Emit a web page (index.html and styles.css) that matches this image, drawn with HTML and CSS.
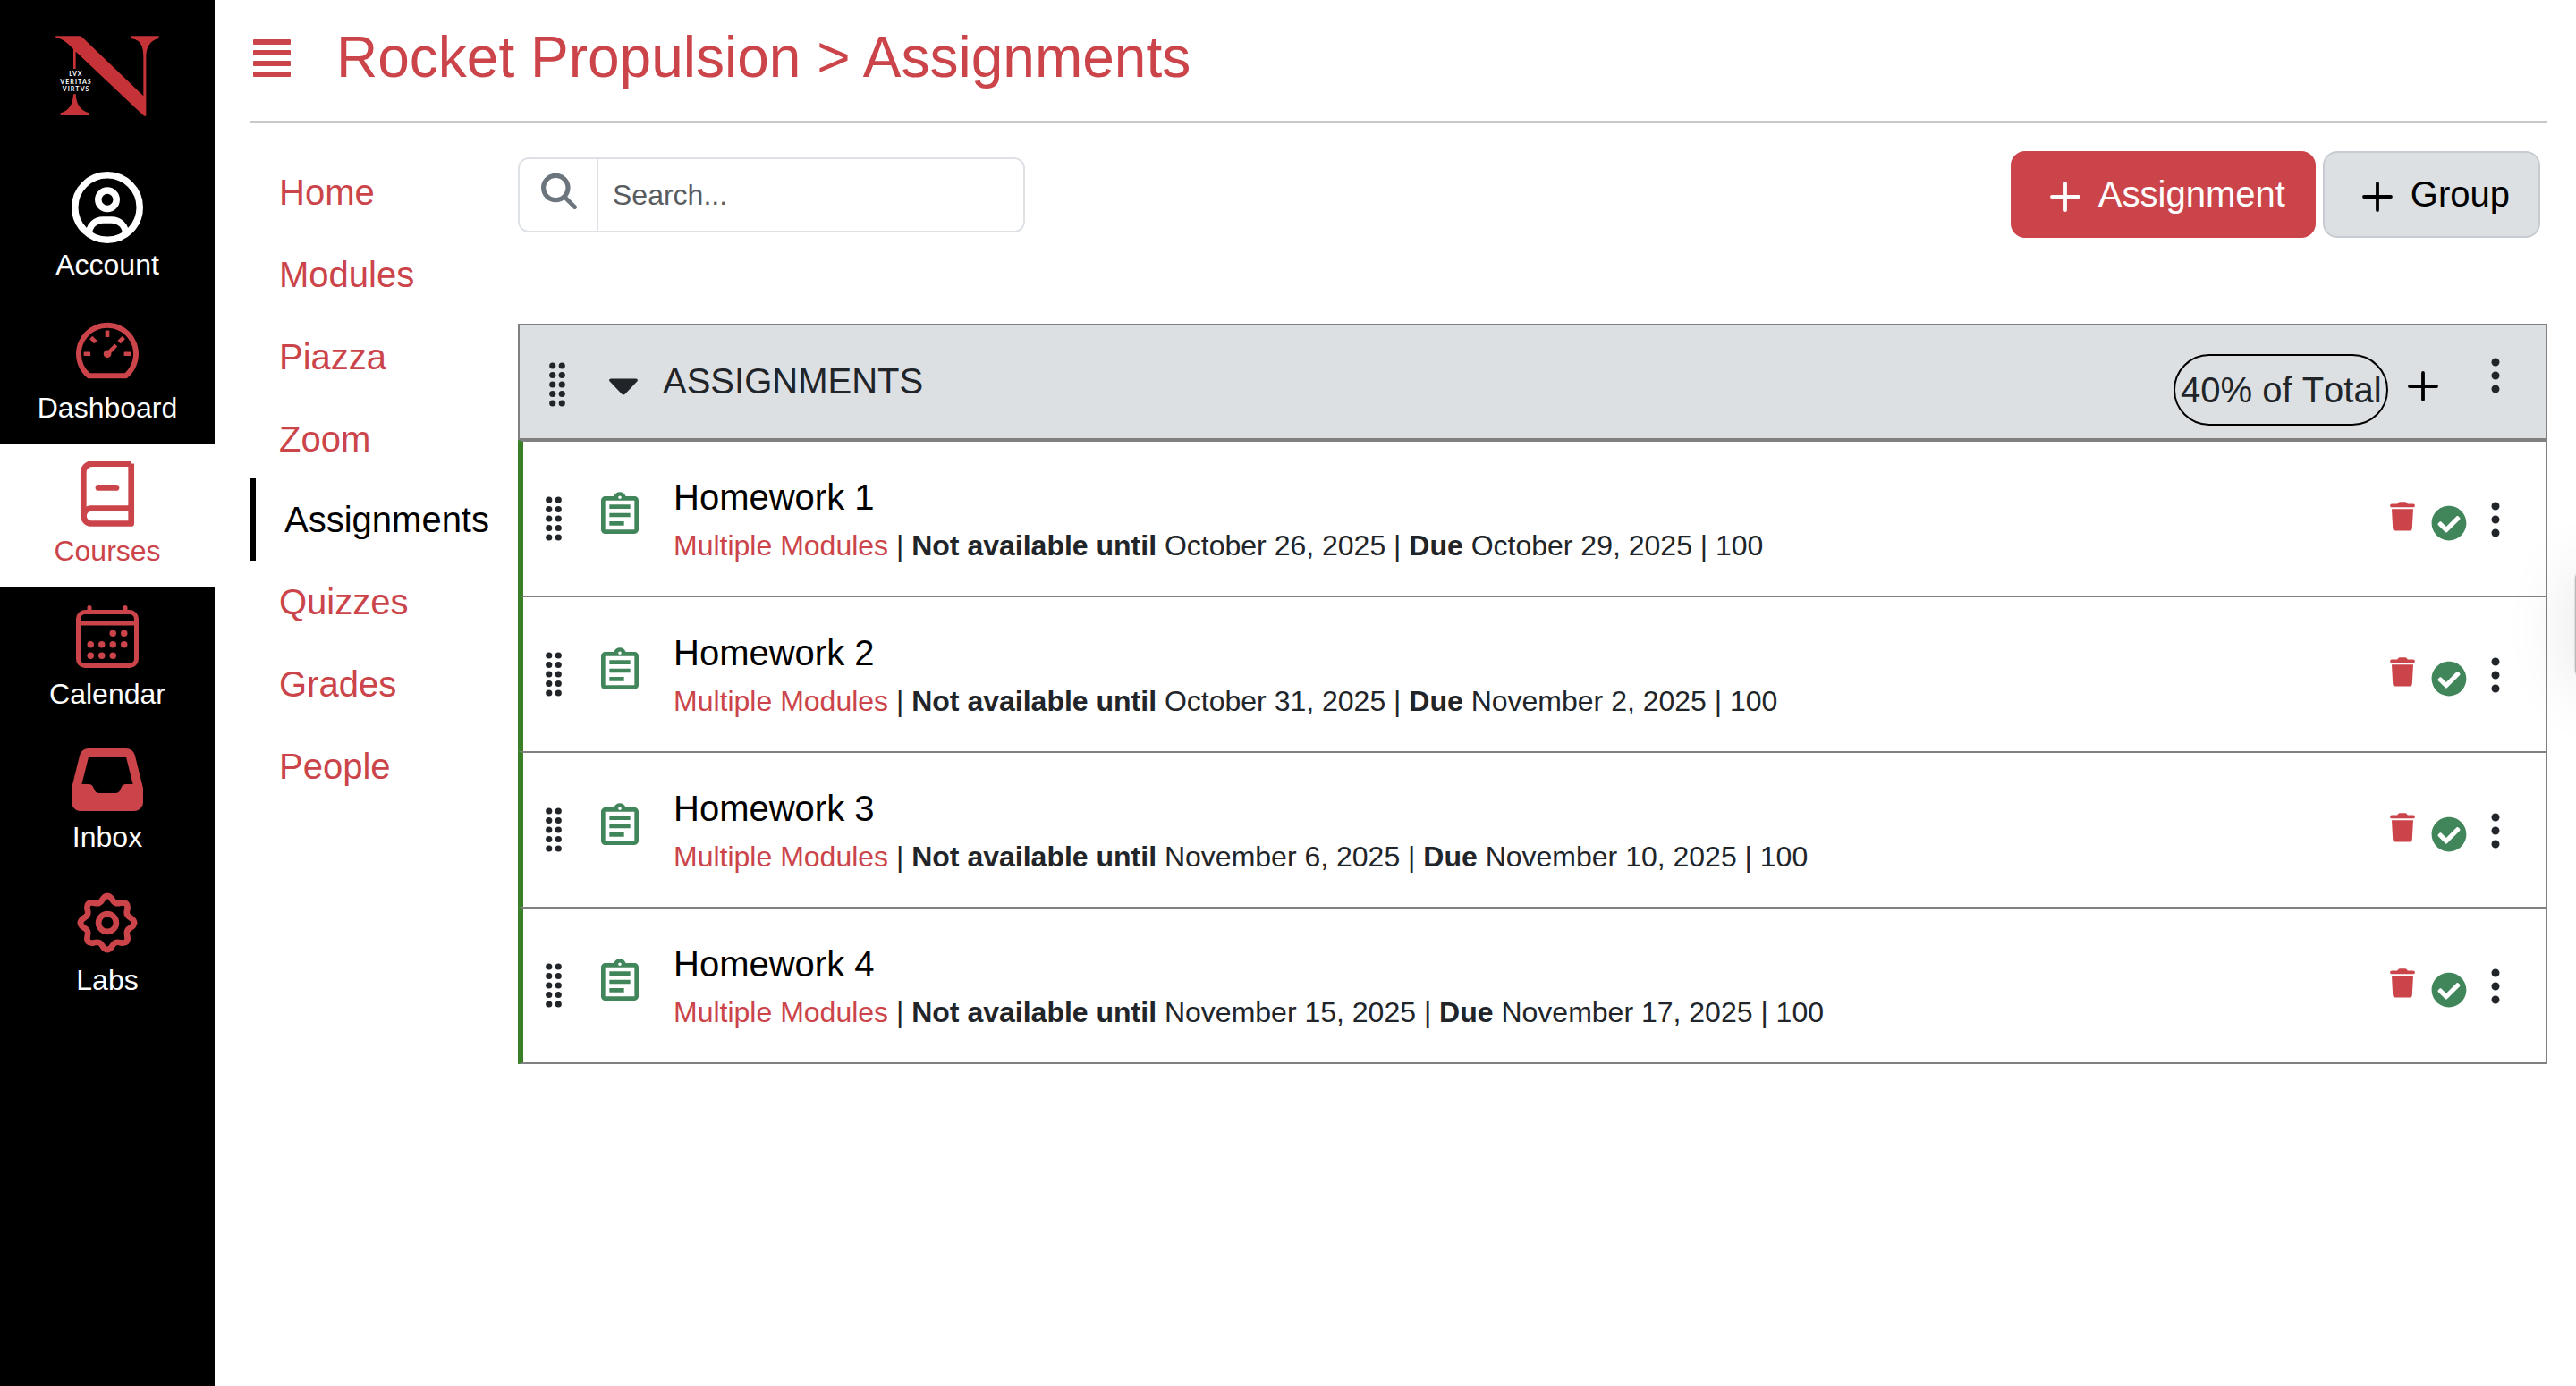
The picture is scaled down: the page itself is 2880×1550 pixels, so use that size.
FILE: index.html
```html
<!DOCTYPE html>
<html lang="en">
<head>
<meta charset="utf-8">
<title>Rocket Propulsion - Assignments</title>
<link rel="stylesheet" href="styles.css">
</head>
<body>
<svg class="defs" width="0" height="0" aria-hidden="true">
  <symbol id="grip" viewBox="0 0 18 50">
    <g fill="currentColor"><circle cx="3.75" cy="4" r="3.6"/><circle cx="14.25" cy="4" r="3.6"/><circle cx="3.75" cy="14.5" r="3.6"/><circle cx="14.25" cy="14.5" r="3.6"/><circle cx="3.75" cy="25" r="3.6"/><circle cx="14.25" cy="25" r="3.6"/><circle cx="3.75" cy="35.5" r="3.6"/><circle cx="14.25" cy="35.5" r="3.6"/><circle cx="3.75" cy="46" r="3.6"/><circle cx="14.25" cy="46" r="3.6"/></g>
  </symbol>
  <symbol id="kebab" viewBox="0 0 16 16">
    <path fill="currentColor" d="M9.5 13a1.5 1.5 0 1 1-3 0 1.5 1.5 0 0 1 3 0m0-5a1.5 1.5 0 1 1-3 0 1.5 1.5 0 0 1 3 0m0-5a1.5 1.5 0 1 1-3 0 1.5 1.5 0 0 1 3 0"/>
  </symbol>
  <symbol id="plus" viewBox="0 0 34 34">
    <path d="M17 2v30M2 17h30" stroke="currentColor" stroke-width="3.8" stroke-linecap="round"/>
  </symbol>
  <symbol id="task" viewBox="0 0 24 24">
    <path fill="currentColor" d="M7 15h7v2H7zm0-4h10v2H7zm0-4h10v2H7zm12-4h-4.180C14.400 1.840 13.300 1 12 1s-2.400.840-2.820 2H5c-.140 0-.270.010-.400.040-.390.080-.740.280-1.010.550-.180.180-.330.400-.430.640-.100.230-.160.490-.160.770v14c0 .270.060.540.160.780s.250.450.430.640c.270.270.620.470 1.010.550.130.020.260.030.400.030h14c1.100 0 2-.900 2-2V5c0-1.100-.900-2-2-2zm-7-.250c.410 0 .750.340.750.750s-.340.750-.750.750-.750-.340-.750-.750.340-.750.750-.750zM19 19H5V5h14v14z"/>
  </symbol>
  <symbol id="trash" viewBox="0 0 28 33">
    <path fill="currentColor" d="M2 2.500H8.200L9.300 1Q9.900.200 11 .200H17Q18.100.200 18.700 1L19.800 2.500H26A1.900 1.900 0 0 1 26 6.300H2A1.900 1.900 0 0 1 2 2.500ZM2 8.300H26L24.800 30Q24.600 32.500 22.200 32.500H5.800Q3.400 32.500 3.200 30Z"/>
  </symbol>
  <symbol id="check" viewBox="0 0 512 512">
    <path fill="currentColor" d="M504 256c0 136.967-111.033 248-248 248S8 392.967 8 256 119.033 8 256 8s248 111.033 248 248zM227.314 387.314l184-184c6.248-6.248 6.248-16.379 0-22.627l-22.627-22.627c-6.248-6.249-16.379-6.249-22.628 0L216 308.118l-70.059-70.059c-6.248-6.248-16.379-6.248-22.628 0l-22.627 22.627c-6.248 6.248-6.248 16.379 0 22.627l104 104c6.249 6.249 16.379 6.249 22.628.001z"/>
  </symbol>
</svg>

<div class="app">
  <aside class="sidebar">
    <svg class="logo" viewBox="0 0 720 528">
      <g fill="#c53338">
        <path d="M187 121H267Q272 121 277 126L481 322V190C481 145 465 133 439 129V121H533V129C507 134 490 155 490 190V389H483L254 173V231H246V165C225 143 210 130 187 127Z"/>
        <path d="M246 316H254C255 350 272 374 299 379V387H203V379C230 374 245 350 246 316Z"/>
      </g>
      <g fill="#fff" class="motto">
        <text x="232" y="254" textLength="42">LVX</text>
        <text x="202" y="281" textLength="103">VERITAS</text>
        <text x="209" y="307" textLength="89">VIRTVS</text>
      </g>
    </svg>
    <a class="side-item account">
      <svg viewBox="0 0 80 80" fill="none" stroke="currentColor" stroke-width="7.500"><circle cx="40" cy="40" r="36.250"/><circle cx="40" cy="31.300" r="10.200"/><path d="M19.500 68C20 60 27 54 35 54H45C53 54 60 60 60.500 68"/></svg>
      <span>Account</span>
    </a>
    <a class="side-item">
      <svg viewBox="0 0 1024 1024" fill="currentColor"><path d="M924.800 385.600a446.700 446.700 0 0 0-96-142.400 446.700 446.700 0 0 0-142.400-96C631.100 123.800 572.500 112 512 112s-119.100 11.800-174.400 35.200a446.700 446.700 0 0 0-142.400 96 446.700 446.700 0 0 0-96 142.400C75.800 440.900 64 499.500 64 560c0 132.700 58.300 257.700 159.900 343.100l1.700 1.400c5.800 4.800 13.100 7.500 20.600 7.500h531.700c7.500 0 14.800-2.700 20.600-7.500l1.700-1.400C901.700 817.700 960 692.700 960 560c0-60.500-11.900-119.100-35.200-174.400zM761.400 836H262.600A371.120 371.120 0 0 1 140 560c0-99.400 38.700-192.800 109-263 70.300-70.300 163.700-109 263-109 99.400 0 192.800 38.700 263 109 70.300 70.300 109 163.700 109 263 0 105.600-44.500 205.500-122.600 276zM623.500 421.500a8.030 8.030 0 0 0-11.300 0L527.700 506c-18.700-5-39.400-.2-54.100 14.500a55.950 55.950 0 0 0 0 79.200 55.950 55.950 0 0 0 79.200 0 55.870 55.870 0 0 0 14.500-54.100l84.500-84.500c3.100-3.100 3.100-8.200 0-11.300l-28.300-28.300zM490 320h44c4.400 0 8-3.600 8-8v-80c0-4.400-3.600-8-8-8h-44c-4.400 0-8 3.600-8 8v80c0 4.400 3.600 8 8 8zm260 218v44c0 4.400 3.600 8 8 8h80c4.400 0 8-3.600 8-8v-44c0-4.400-3.600-8-8-8h-80c-4.400 0-8 3.600-8 8zm12.700-197.200l-31.100-31.100a8.030 8.030 0 0 0-11.300 0l-56.600 56.600a8.030 8.030 0 0 0 0 11.300l31.100 31.100c3.100 3.100 8.200 3.100 11.300 0l56.600-56.600c3.100-3.100 3.100-8.200 0-11.300zm-458.600-31.100a8.030 8.030 0 0 0-11.300 0l-31.100 31.100a8.030 8.030 0 0 0 0 11.300l56.600 56.600c3.100 3.100 8.200 3.100 11.300 0l31.100-31.100c3.100-3.100 3.100-8.200 0-11.300l-56.600-56.600zM262 530h-80c-4.400 0-8 3.600-8 8v44c0 4.400 3.600 8 8 8h80c4.400 0 8-3.600 8-8v-44c0-4.400-3.600-8-8-8z"/></svg>
      <span>Dashboard</span>
    </a>
    <a class="side-item active">
      <svg viewBox="0 0 80 80" fill="none" stroke="currentColor" stroke-width="6.700" stroke-linejoin="round"><path d="M66.700 6.600H23a9.700 9.700 0 0 0-9.700 9.700V65"/><path d="M66.700 56.500H22a8.500 8.500 0 0 0 0 17H66.700V6.600"/><path d="M30 33.400H50" stroke-linecap="round"/></svg>
      <span>Courses</span>
    </a>
    <a class="side-item">
      <svg viewBox="0 0 512 512" fill="none" stroke="currentColor" stroke-width="32" stroke-linejoin="round"><rect x="48" y="80" width="416" height="384" rx="48"/><path d="M128 48v32M384 48v32" stroke-linecap="round"/><path d="M464 160H48"/><g fill="currentColor" stroke="none"><circle cx="296" cy="232" r="24"/><circle cx="376" cy="232" r="24"/><circle cx="296" cy="312" r="24"/><circle cx="376" cy="312" r="24"/><circle cx="136" cy="312" r="24"/><circle cx="216" cy="312" r="24"/><circle cx="136" cy="392" r="24"/><circle cx="216" cy="392" r="24"/><circle cx="296" cy="392" r="24"/></g></svg>
      <span>Calendar</span>
    </a>
    <a class="side-item">
      <svg viewBox="0 0 512 512" fill="currentColor"><path d="M121 32C91.600 32 66 52 58.900 80.500L1.900 308.400C.6 313.500 0 318.700 0 323.900V416c0 35.300 28.700 64 64 64H448c35.300 0 64-28.700 64-64V323.900c0-5.200-.6-10.400-1.900-15.500l-57-227.900C446 52 420.400 32 391 32H121zm0 64H391l48 192H387.800c-12.100 0-23.200 6.800-28.600 17.700l-14.300 28.600c-5.400 10.800-16.500 17.700-28.600 17.700H195.800c-12.100 0-23.200-6.800-28.600-17.700l-14.300-28.600c-5.400-10.800-16.500-17.700-28.600-17.700H73L121 96z"/></svg>
      <span>Inbox</span>
    </a>
    <a class="side-item">
      <svg viewBox="-40 -40 80 80" fill="none" stroke="currentColor" stroke-width="6.700" stroke-linecap="round">
        <circle r="9.900"/>
        <path id="lobe" d="M0-30C5.500-30 4.560-24.080 9.180-22.170 13.800-20.260 17.320-25.100 21.210-21.210"/>
        <use href="#lobe" transform="rotate(45)"/><use href="#lobe" transform="rotate(90)"/><use href="#lobe" transform="rotate(135)"/><use href="#lobe" transform="rotate(180)"/><use href="#lobe" transform="rotate(225)"/><use href="#lobe" transform="rotate(270)"/><use href="#lobe" transform="rotate(315)"/>
      </svg>
      <span>Labs</span>
    </a>
  </aside>

  <main class="main">
    <header class="page-head">
      <svg class="menu" viewBox="0 0 42 42" fill="currentColor"><rect width="42" height="6" rx="1"/><rect y="12" width="42" height="6" rx="1"/><rect y="24" width="42" height="6" rx="1"/><rect y="36" width="42" height="6" rx="1"/></svg>
      <h1>Rocket Propulsion &gt; Assignments</h1>
    </header>

    <div class="columns">
      <nav class="course-nav">
        <a>Home</a>
        <a>Modules</a>
        <a>Piazza</a>
        <a>Zoom</a>
        <a class="current">Assignments</a>
        <a>Quizzes</a>
        <a>Grades</a>
        <a>People</a>
      </nav>

      <section class="content">
        <div class="controls">
          <div class="search">
            <span class="search-icon"><svg viewBox="0 0 40 40" fill="none" stroke="currentColor"><circle cx="16.300" cy="16" r="13.700" stroke-width="5.200"/><path d="M26 26L37.600 37.600" stroke-width="4.800" stroke-linecap="round"/></svg></span>
            <span class="search-input">Search...</span>
          </div>
          <div class="buttons">
            <a class="btn danger"><svg><use href="#plus"/></svg>Assignment</a>
            <a class="btn light"><svg><use href="#plus"/></svg>Group</a>
          </div>
        </div>

        <div class="group">
          <div class="group-head">
            <svg class="grip"><use href="#grip"/></svg>
            <svg class="caret" viewBox="0 0 32 19"><path fill="currentColor" d="M2 .500H30Q33 1 31.300 3.500L18 17.500Q16 19.500 14 17.500L.700 3.500Q-1 1 2 .500Z"/></svg>
            <span class="group-title">ASSIGNMENTS</span>
            <span class="pill">40% of Total</span>
            <svg class="add"><use href="#plus"/></svg>
            <svg class="kebab"><use href="#kebab"/></svg>
          </div>

          <div class="row">
            <svg class="grip"><use href="#grip"/></svg>
            <svg class="task"><use href="#task"/></svg>
            <div class="info"><div class="name">Homework 1</div><div class="meta"><span class="mods">Multiple Modules</span> | <b>Not available until</b> October 26, 2025 | <b>Due</b> October 29, 2025 | 100</div></div>
            <svg class="trash"><use href="#trash"/></svg>
            <svg class="check"><use href="#check"/></svg>
            <svg class="kebab"><use href="#kebab"/></svg>
          </div>
          <div class="row">
            <svg class="grip"><use href="#grip"/></svg>
            <svg class="task"><use href="#task"/></svg>
            <div class="info"><div class="name">Homework 2</div><div class="meta"><span class="mods">Multiple Modules</span> | <b>Not available until</b> October 31, 2025 | <b>Due</b> November 2, 2025 | 100</div></div>
            <svg class="trash"><use href="#trash"/></svg>
            <svg class="check"><use href="#check"/></svg>
            <svg class="kebab"><use href="#kebab"/></svg>
          </div>
          <div class="row">
            <svg class="grip"><use href="#grip"/></svg>
            <svg class="task"><use href="#task"/></svg>
            <div class="info"><div class="name">Homework 3</div><div class="meta"><span class="mods">Multiple Modules</span> | <b>Not available until</b> November 6, 2025 | <b>Due</b> November 10, 2025 | 100</div></div>
            <svg class="trash"><use href="#trash"/></svg>
            <svg class="check"><use href="#check"/></svg>
            <svg class="kebab"><use href="#kebab"/></svg>
          </div>
          <div class="row">
            <svg class="grip"><use href="#grip"/></svg>
            <svg class="task"><use href="#task"/></svg>
            <div class="info"><div class="name">Homework 4</div><div class="meta"><span class="mods">Multiple Modules</span> | <b>Not available until</b> November 15, 2025 | <b>Due</b> November 17, 2025 | 100</div></div>
            <svg class="trash"><use href="#trash"/></svg>
            <svg class="check"><use href="#check"/></svg>
            <svg class="kebab"><use href="#kebab"/></svg>
          </div>
        </div>
      </section>
    </div>
  </main>
</div>
<div class="edge-clip"><div class="edge-tab"></div></div>
</body>
</html>
```

FILE: styles.css
```css
:root {
  --red: #cb444a;
  --ink: #212529;
  --line: #808080;
  --grey: #dde0e3;
}

* { box-sizing: border-box; }

body {
  margin: 0;
  background: #fff;
  color: var(--ink);
  font: 32px/48px "Liberation Sans", Arial, sans-serif;
}

svg { display: block; flex: none; }
.defs { position: absolute; }

.app { display: flex; height: 1550px; }

/* Global sidebar */
.sidebar { width: 240px; flex: none; background: #000; }
.logo { width: 240px; height: 176px; }
.motto { font: bold 21px "Lato", sans-serif; }
.side-item {
  display: flex;
  flex-direction: column;
  align-items: center;
  height: 160px;
  padding-top: 16px;
  color: var(--red);
}
.side-item svg { width: 80px; height: 80px; }
.side-item span { color: #fff; }
.side-item.account { color: #fff; }
.side-item.active { background: #fff; }
.side-item.active span { color: var(--red); }

/* Page heading */
.main { flex: 1; padding: 0 32px 0 40px; }
.page-head {
  display: flex;
  height: 137px;
  border-bottom: 2px solid #c8c8c9;
  color: var(--red);
}
.menu { width: 42px; height: 42px; margin: 44px 0 0 3px; }
h1 {
  margin: 26px 0 0 51px;
  font-size: 64px;
  font-weight: 400;
  line-height: 77px;
}

/* Course navigation */
.columns { display: flex; padding-top: 32px; }
.course-nav { display: flex; flex-direction: column; width: 299px; flex: none; }
.course-nav a {
  height: 92px;
  padding: 16px 32px;
  font-size: 40px;
  line-height: 60px;
  color: var(--red);
}
.course-nav .current {
  margin-top: -2px;
  border-left: 6px solid #000;
  color: #000;
}

.content { flex: 1; }

/* Search and buttons */
.controls { display: flex; justify-content: space-between; height: 193px; padding-right: 8px; }
.search {
  display: flex;
  width: 567px;
  height: 84px;
  margin-top: 7px;
  border: 2px solid #dee2e6;
  border-radius: 12px;
}
.search-icon {
  width: 88px;
  padding: 16px 0 0 24px;
  border-right: 2px solid #dee2e6;
  color: #6c757d;
}
.search-icon svg { width: 40px; height: 40px; }
.search-input { padding: 16px; color: #595c5f; }
.buttons { display: flex; gap: 8px; }
.btn {
  display: flex;
  align-items: center;
  height: 97px;
  padding: 0 32px 2px 42px;
  border: 2px solid;
  border-radius: 16px;
  font-size: 40px;
  line-height: 60px;
}
.btn svg { width: 34px; height: 34px; margin: 6px 20px 0 0; }
.btn.danger { background: var(--red); border-color: var(--red); color: #fff; }
.btn.light { background: var(--grey); border-color: #c6ccd1; color: #000; }

/* Assignment group */
.group-head {
  display: flex;
  height: 130px;
  border: 2px solid var(--line);
  background: var(--grey);
  font-size: 40px;
  line-height: 60px;
}
.grip { width: 18px; height: 50px; margin: 41px 0 0 33px; }
.caret { width: 32px; height: 19px; margin: 59px 0 0 49px; }
.group-title { margin: 32px auto 0 28px; }
.pill {
  width: 240px;
  height: 80px;
  margin-top: 32px;
  padding: 8px 6px;
  border: 2px solid #000;
  border-radius: 40px;
  font-kerning: none;
  white-space: nowrap;
}
.add { width: 34px; height: 34px; margin: 51px 0 0 22px; color: #000; }
.kebab { width: 48px; height: 48px; margin: 32px 32px 0 40px; }

.row {
  display: flex;
  height: 176px;
  border: 2px solid var(--line);
  border-left: 6px solid #387f25;
}
.row + .row { margin-top: -2px; }
.row .grip { margin: 61px 0 0 25px; }
.task { width: 56px; height: 56px; margin: 54px 0 0 37px; color: #41865a; }
.info { flex: 1; margin: 32px 0 0 32px; }
.name { font-size: 40px; line-height: 60px; color: #000; }
.meta { line-height: 48px; }
.mods { color: var(--red); }
.trash { width: 28px; height: 33px; margin-top: 67px; color: var(--red); }
.check { width: 40px; height: 40px; margin: 71px 0 0 18px; color: #41865a; }
.row .kebab { margin: 63px 32px 0 8px; }

/* Browser side tab, mostly beyond the right edge */
.edge-clip {
  position: absolute;
  top: 480px;
  right: 0;
  width: 120px;
  height: 440px;
  overflow: hidden;
}
.edge-tab {
  position: absolute;
  top: 156px;
  left: 119px;
  width: 60px;
  height: 124px;
  border-radius: 12px;
  background: #b8b8b8;
  box-shadow: 0 0 2px rgba(0, 0, 0, .3), 0 6px 80px rgba(0, 0, 0, .12);
}
```
